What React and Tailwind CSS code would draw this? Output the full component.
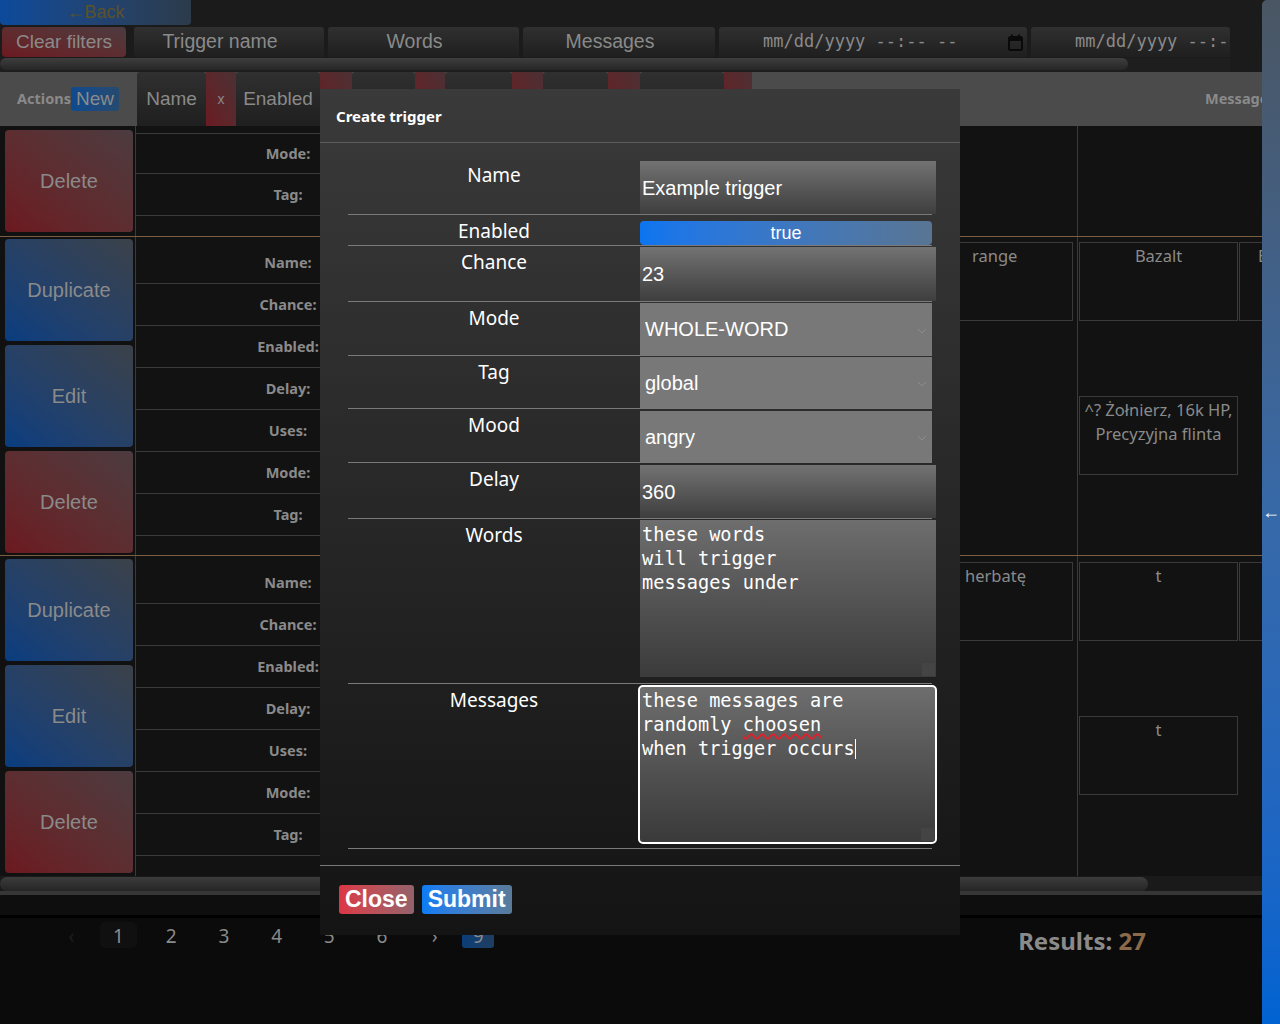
import React from 'react';

const redBtn = 'bg-linear-to-tr from-[#6c1820] to-[#4b3b40]';
const blueBtn = 'bg-linear-to-tr from-[#083d80] to-[#3b4149]';
const darkCell = 'bg-linear-to-b from-[#303030] to-[#1f1f1f]';
const redCell = 'bg-linear-to-tr from-[#6a1a22] to-[#4b3034]';

function ActionButton({ label, tone }) {
  return (
    <div
      className={`flex h-[102px] w-[128px] shrink-0 items-center justify-center rounded-[4px] text-[20px] text-[#8a8a8a] ${
        tone === 'red' ? redBtn : blueBtn
      }`}
    >
      {label}
    </div>
  );
}

function Cell({ children, className = '' }) {
  return (
    <div
      className={`h-[79px] shrink-0 border border-[#3a3a3a] bg-[#121212] pt-[1px] font-['Noto_Sans',sans-serif] text-[16.5px] leading-[24px] text-[#8a8a8a] ${className}`}
    >
      {children}
    </div>
  );
}

function Record({ buttons, buttonPad, rows, tail, colA, colB, last }) {
  return (
    <div className={`flex shrink-0 ${last ? '' : 'border-b border-[#7b5d42]'}`}>
      <div
        className={`flex w-[136px] shrink-0 flex-col gap-[4px] border-r border-[#3a3a3a] bg-[#111111] pl-[5px] ${buttonPad}`}
      >
        {buttons.map(([label, tone], i) => (
          <ActionButton key={i} label={label} tone={tone} />
        ))}
      </div>
      <div className="flex w-[304px] shrink-0 flex-col bg-[#121212]">
        {rows.map(([label, size], i) => (
          <div
            key={i}
            className={`flex items-center justify-center border-b border-[#3a3a3a] font-['Noto_Sans',sans-serif] text-[14.5px] font-bold text-[#8a8a8a] ${size}`}
          >
            {label}
          </div>
        ))}
        <div className={tail} />
      </div>
      <div className="w-[518px] shrink-0 bg-[#121212]" />
      <div className="w-[120px] shrink-0 border-r border-[#3a3a3a] bg-[#121212]">{colA}</div>
      <div className="flex-1 overflow-hidden bg-[#121212]">{colB}</div>
    </div>
  );
}

const fullRows = [
  ['Name:', 'h-[47px] pt-[6px]'],
  ['Chance:', 'h-[42px]'],
  ['Enabled:', 'h-[42px]'],
  ['Delay:', 'h-[42px]'],
  ['Uses:', 'h-[42px]'],
  ['Mode:', 'h-[42px]'],
  ['Tag:', 'h-[42px]'],
];

function FormRow({ label, cellClass, children }) {
  return (
    <div className="flex border-b border-[#7a7a7a]">
      <div className="w-[292px] pt-[3px] text-center font-['Noto_Sans',sans-serif] text-[19px] leading-[27px] text-white">
        {label}
      </div>
      <div className={`w-[292px] ${cellClass}`}>{children}</div>
    </div>
  );
}

function TextBox({ value }) {
  return (
    <div className="flex h-[53px] w-[296px] items-center bg-linear-to-b from-[#737373] to-[#3e3e3e] pl-[2px] text-[20px] text-white">
      {value}
    </div>
  );
}

function SelectBox({ value, height }) {
  return (
    <div
      className={`flex w-[292px] items-center justify-between bg-[#787878] pl-[5px] pr-[5px] text-[20px] text-white ${height}`}
    >
      <span>{value}</span>
      <svg width="10" height="6" viewBox="0 0 10 6" className="mt-[3px]">
        <path d="M1 1l4 4 4-4" fill="none" stroke="#8c8c8c" strokeWidth="1" />
      </svg>
    </div>
  );
}

function CalendarIcon() {
  return (
    <svg width="15" height="17" viewBox="0 0 15 17">
      <rect x="1" y="3" width="13" height="13" rx="1.5" fill="none" stroke="#0a0a0a" strokeWidth="2" />
      <rect x="1" y="3" width="13" height="4" fill="#0a0a0a" />
      <path d="M4 0.5v3M11 0.5v3" stroke="#0a0a0a" strokeWidth="2" />
    </svg>
  );
}

function Modal() {
  return (
    <div className="absolute left-[320px] top-[89px] flex h-[846px] w-[640px] flex-col bg-linear-to-b from-[#3a3a3a] via-[#272727] to-[#141414] text-white">
      <div className="flex h-[54px] shrink-0 items-center border-b border-[#5c5c5c] pl-[16px] pt-[2px] font-['Noto_Sans',sans-serif] text-[15px] font-bold">
        Create trigger
      </div>
      <div className="flex h-[722px] shrink-0 flex-col px-[28px] pt-[16px]">
        <FormRow label="Name" cellClass="pt-[2px]">
          <TextBox value="Example trigger" />
        </FormRow>
        <FormRow label="Enabled" cellClass="pt-[6px]">
          <div className="flex h-[24px] w-[292px] items-center justify-center rounded-[4px] bg-linear-to-r from-[#0b75f0] to-[#587592] text-[18px] text-white">
            true
          </div>
        </FormRow>
        <FormRow label="Chance" cellClass="pt-[1px]">
          <div className="flex h-[54px] w-[296px] items-center bg-linear-to-b from-[#737373] to-[#3e3e3e] pl-[2px] text-[20px] text-white">
            23
          </div>
        </FormRow>
        <FormRow label="Mode" cellClass="pt-[1px]">
          <SelectBox value="WHOLE-WORD" height="h-[52px]" />
        </FormRow>
        <FormRow label="Tag" cellClass="pt-[1px]">
          <SelectBox value="global" height="h-[51px]" />
        </FormRow>
        <FormRow label="Mood" cellClass="pt-[2px]">
          <SelectBox value="angry" height="h-[51px]" />
        </FormRow>
        <FormRow label="Delay" cellClass="pt-[2px]">
          <TextBox value="360" />
        </FormRow>
        <FormRow label="Words" cellClass="pt-[1px] pb-[6px]">
          <div className="relative h-[157px] w-[296px] whitespace-pre bg-linear-to-b from-[#6e6e6e] to-[#3b3b3b] pl-[2px] pt-[3px] font-['DejaVu_Sans_Mono',monospace] text-[18.6px] leading-[24px] text-white">
            {'these words\nwill trigger\nmessages under'}
            <div className="absolute bottom-[1px] right-[1px] h-[13px] w-[13px] bg-[#444444]" />
          </div>
        </FormRow>
        <FormRow label="Messages" cellClass="pt-[1px] pb-[4px]">
          <div className="relative ml-[-2px] h-[159px] w-[299px] whitespace-pre rounded-[5px] border-2 border-white bg-linear-to-b from-[#6e6e6e] to-[#3a3a3a] pl-[2px] pt-[2px] font-['DejaVu_Sans_Mono',monospace] text-[18.6px] leading-[24px] text-white">
            {'these messages are\nrandomly '}
            <span className="underline decoration-[#e0202a] decoration-wavy decoration-[1.5px] underline-offset-[2px]">choosen</span>
            {'\nwhen trigger occurs'}
            <span className="inline-block h-[20px] w-px bg-white align-[-4px]" />
            <div className="absolute bottom-[1px] right-[1px] h-[13px] w-[13px] bg-[#444444]" />
          </div>
        </FormRow>
      </div>
      <div className="flex h-[70px] shrink-0 gap-[8px] border-t border-[#7a7a7a] pl-[19px] pt-[19px]">
        <div className="flex h-[29px] items-center rounded-[3px] bg-linear-to-r from-[#dc3545] to-[#93616b] px-[6px] text-[23px] font-bold text-white">
          Close
        </div>
        <div className="flex h-[29px] items-center rounded-[3px] bg-linear-to-r from-[#0a7cf5] to-[#5a7b9a] px-[6px] text-[23px] font-bold text-white">
          Submit
        </div>
      </div>
    </div>
  );
}

function HeaderCells() {
  const cells = [
    ['Name', 'w-[69px]', 'x', 'w-[30px]'],
    ['Enabled', 'w-[84px]', '', 'w-[32px]'],
    ['', 'w-[63px]', '', 'w-[30px]'],
    ['', 'w-[67px]', '', 'w-[31px]'],
    ['', 'w-[65px]', '', 'w-[32px]'],
    ['Created', 'w-[84px]', '', 'w-[28px]'],
  ];
  return cells.map(([label, w, x, xw], i) => (
    <React.Fragment key={i}>
      <div
        className={`flex shrink-0 items-center justify-center rounded-t-[3px] text-[19px] text-[#8a8a8a] ${darkCell} ${w}`}
      >
        {label}
      </div>
      <div className={`flex shrink-0 items-center justify-center text-[14px] text-[#8a8a8a] ${redCell} ${xw}`}>
        {x}
      </div>
    </React.Fragment>
  ));
}

export default function App() {
  return (
    <div className="relative flex h-[1024px] w-[1280px] overflow-hidden bg-[#1b1b1b] font-['Liberation_Sans',Arial,sans-serif]">
      <div className="flex w-[1262px] shrink-0 flex-col">
        <div className="h-[27px] shrink-0">
          <div className="flex h-[25px] w-[191px] items-center justify-center rounded-b-[4px] bg-linear-to-r from-[#0b4a9c] to-[#2c3b4b] text-[18px] text-[#5b5229]">
            ←Back
          </div>
        </div>

        <div className="flex h-[31px] shrink-0 gap-[4px] overflow-hidden">
          <div className={`ml-[2px] flex h-[30px] w-[124px] shrink-0 items-center justify-center rounded-[4px] text-[19px] text-[#8a8a8a] ${redBtn}`}>
            Clear filters
          </div>
          <div className={`ml-[4px] flex h-[30px] w-[190px] shrink-0 items-center justify-center rounded-t-[3px] pr-[18px] text-[19.5px] text-[#8a8a8a] ${darkCell}`}>
            Trigger name
          </div>
          <div className={`flex h-[30px] w-[191px] shrink-0 items-center justify-center rounded-t-[3px] pr-[18px] text-[19.5px] text-[#8a8a8a] ${darkCell}`}>
            Words
          </div>
          <div className={`flex h-[30px] w-[192px] shrink-0 items-center justify-center rounded-t-[3px] pr-[18px] text-[19.5px] text-[#8a8a8a] ${darkCell}`}>
            Messages
          </div>
          <div className={`flex h-[30px] w-[308px] shrink-0 items-center justify-between rounded-t-[3px] pl-[44px] pr-[4px] font-['DejaVu_Sans_Mono',monospace] text-[17px] text-[#8a8a8a] ${darkCell}`}>
            <span className="whitespace-pre">mm/dd/yyyy --:-- --</span>
            <CalendarIcon />
          </div>
          <div className={`flex h-[30px] w-[199px] shrink-0 items-center overflow-hidden whitespace-pre rounded-t-[3px] pl-[44px] font-['DejaVu_Sans_Mono',monospace] text-[17px] text-[#8a8a8a] ${darkCell}`}>
            mm/dd/yyyy --:-- --
          </div>
        </div>

        <div className="h-[14px] w-[1230px] shrink-0 bg-[#1e1e1e]">
          <div className="h-[12px] w-[1128px] rounded-full bg-linear-to-b from-[#3e3e3e] to-[#262626]" />
        </div>

        <div className="flex h-[54px] shrink-0 overflow-hidden bg-[#4b4b4b]">
          <div className="flex w-[137px] shrink-0 items-center pl-[17px]">
            <span className="font-['Noto_Sans',sans-serif] text-[14.5px] font-bold text-[#8a8a8a]">Actions</span>
            <span className="flex h-[24px] items-center rounded-[3px] bg-linear-to-r from-[#0d4a8f] to-[#264a6f] px-[5px] text-[19px] text-[#8a8a8a]">
              New
            </span>
          </div>
          <HeaderCells />
          <div className="ml-[453px] flex shrink-0 items-center whitespace-nowrap font-['Noto_Sans',sans-serif] text-[14.5px] font-bold text-[#8a8a8a]">
            Messages
          </div>
        </div>

        <div className="flex h-[750px] shrink-0 flex-col overflow-hidden">
          <Record
            buttons={[['Delete', 'red']]}
            buttonPad="pt-[4px]"
            rows={[
              ['', 'h-[8px]'],
              ['Mode:', 'h-[40px]'],
              ['Tag:', 'h-[42px]'],
            ]}
            tail="h-[20px]"
          />
          <Record
            buttons={[
              ['Duplicate', 'blue'],
              ['Edit', 'blue'],
              ['Delete', 'red'],
            ]}
            buttonPad="pt-[2px]"
            rows={fullRows}
            tail="h-[19px]"
            colA={
              <div className="pt-[5px]">
                <Cell className="w-[115px] pl-[13px] text-left">range</Cell>
              </div>
            }
            colB={
              <div className="pl-[1px] pt-[5px]">
                <div className="flex gap-[1px]">
                  <Cell className="w-[159px] text-center">Bazalt</Cell>
                  <Cell className="w-[60px] pl-[18px] text-left">B</Cell>
                </div>
                <Cell className="mt-[75px] w-[159px] whitespace-nowrap text-center">
                  ^? Żołnierz, 16k HP,
                  <br />
                  Precyzyjna flinta
                </Cell>
              </div>
            }
          />
          <Record
            last
            buttons={[
              ['Duplicate', 'blue'],
              ['Edit', 'blue'],
              ['Delete', 'red'],
            ]}
            buttonPad="pt-[3px]"
            rows={[['Name:', 'h-[48px] pt-[6px]'], ...fullRows.slice(1)]}
            tail="h-[20px]"
            colA={
              <div className="pt-[6px]">
                <Cell className="w-[115px] pl-[6px] text-left">herbatę</Cell>
              </div>
            }
            colB={
              <div className="pl-[1px] pt-[6px]">
                <div className="flex gap-[1px]">
                  <Cell className="w-[159px] text-center">t</Cell>
                  <Cell className="w-[60px]" />
                </div>
                <Cell className="mt-[75px] w-[159px] text-center">t</Cell>
              </div>
            }
          />
        </div>

        <div className="h-[15px] shrink-0 bg-[#1a1a1a] pt-[1px]">
          <div className="h-[14px] w-[1148px] rounded-full bg-linear-to-b from-[#3c3c3c] to-[#252525]" />
        </div>
        <div className="h-[4px] shrink-0 bg-[#363636]" />
        <div className="h-[20px] shrink-0 bg-[#0e0e0e]" />
        <div className="h-[3px] shrink-0 bg-black" />

        <div className="flex flex-1 items-start bg-[#0b0b0b] pt-[4px] font-['Noto_Sans',sans-serif] text-[19px] text-[#8a8a8a]">
          <div className="ml-[53px] flex h-[26px] w-[37px] items-center justify-center pt-[3px] text-[#1f1f1f]">‹</div>
          <div className="ml-[10px] flex h-[26px] w-[37px] items-center justify-center rounded-[5px] bg-[#101010] pt-[3px]">1</div>
          {['2', '3', '4', '5', '6', '›'].map((p) => (
            <div key={p} className="ml-[15.7px] flex h-[26px] w-[37px] items-center justify-center pt-[3px]">
              {p}
            </div>
          ))}
          <div className="ml-[9px] flex h-[26px] w-[32px] items-center justify-center rounded-[3px] bg-linear-to-r from-[#0b3d78] to-[#1e3e60] pt-[3px]">
            9
          </div>
          <div className="ml-[524px] mt-[5px] whitespace-nowrap text-[24px] font-bold leading-[28px]">
            Results: <span className="text-[#8b6a4a]">27</span>
          </div>
        </div>
      </div>

      <div className="flex w-[18px] shrink-0 flex-col rounded-tl-[5px] bg-linear-to-b from-[#4a5663] via-[#3769a8] to-[#0063d2] pt-[501px] text-[18px] leading-[22px] text-white">
        ←
      </div>

      <Modal />
    </div>
  );
}
